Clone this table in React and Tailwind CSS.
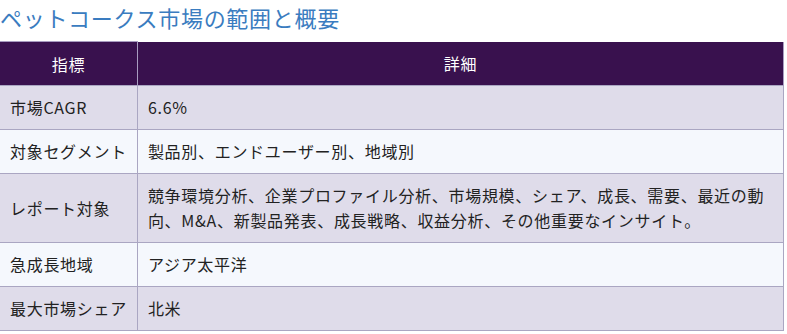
const rows = [
  { label: "市場CAGR", value: "6.6%" },
  { label: "対象セグメント", value: "製品別、エンドユーザー別、地域別" },
  {
    label: "レポート対象",
    value:
      "競争環境分析、企業プロファイル分析、市場規模、シェア、成長、需要、最近の動向、M&A、新製品発表、成長戦略、収益分析、その他重要なインサイト。",
  },
  { label: "急成長地域", value: "アジア太平洋" },
  { label: "最大市場シェア", value: "北米" },
];

export default function App() {
  return (
    <div className="w-[787px] h-[334px] bg-white overflow-hidden font-['Noto_Sans_CJK_JP','Noto_Sans',sans-serif]">
      <h2 className="text-[22px] leading-[34px] mb-[7px] text-[#3a7cc0] font-normal tracking-[0.7px]">
        ペットコークス市場の範囲と概要
      </h2>
      <table className="w-[784px] border-collapse text-[16px] tracking-[0.7px] text-[#222]">
        <thead>
          <tr className="bg-[#39114e] text-white">
            <th className="w-[136px] h-[44px] font-normal border-r border-[#a89cc0] border-t">指標</th>
            <th className="font-normal border-r border-[#a89cc0]">詳細</th>
          </tr>
        </thead>
        <tbody>
          {rows.map((r, i) => (
            <tr
              key={r.label}
              className={`border-t border-b border-[#aaa6c2] ${i % 2 === 0 ? "bg-[#dfdcea]" : "bg-[#f5f8fd]"}`}
            >
              <td className="px-[10px] py-[9px] leading-[25px] border-r border-[#aaa6c2] whitespace-nowrap">
                {r.label}
              </td>
              <td className="px-[10px] py-[9px] leading-[25px] border-r border-[#aaa6c2]">
                {r.value}
              </td>
            </tr>
          ))}
        </tbody>
      </table>
    </div>
  );
}
